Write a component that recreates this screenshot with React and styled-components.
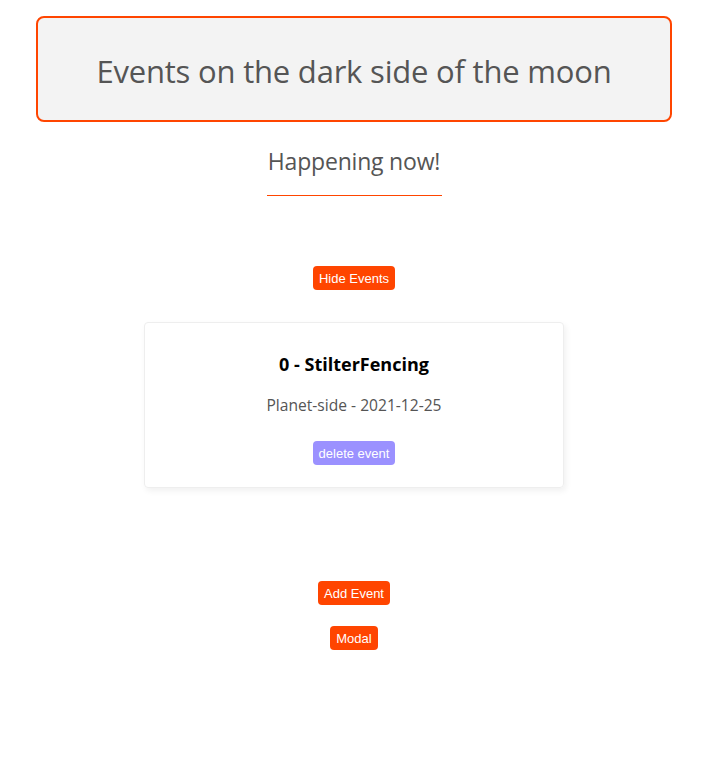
import React from "react";
import styled, { createGlobalStyle } from "styled-components";

const GlobalStyle = createGlobalStyle`
  body {
    margin: 0;
    background: #fff;
    font-family: "Open Sans", "Noto Sans", sans-serif;
  }
`;

const Page = styled.div`
  width: 708px;
  display: flex;
  flex-direction: column;
  align-items: center;
  padding-top: 16px;
`;

const Header = styled.header`
  box-sizing: border-box;
  width: 636px;
  height: 106px;
  padding-top: 4px;
  display: flex;
  align-items: center;
  justify-content: center;
  background: #f3f3f3;
  border: 2px solid #ff4500;
  border-radius: 8px;

  h1 {
    margin: 0;
    font-size: 31px;
    font-weight: 400;
    color: #555;
    letter-spacing: -0.2px;
  }
`;

const Subtitle = styled.h2`
  margin: 23px 0 0;
  padding-bottom: 18px;
  width: 175px;
  text-align: center;
  font-size: 23px;
  font-weight: 400;
  color: #555;
  letter-spacing: -0.2px;
  border-bottom: 1px solid #ff4500;
`;

const Button = styled.button`
  font-family: "Liberation Sans", Arial, sans-serif;
  font-size: 13px;
  font-weight: 400;
  color: #fff;
  background: ${({ $variant }) => ($variant === "soft" ? "#9b91ff" : "#ff4500")};
  border: none;
  border-radius: 4px;
  height: 24px;
  padding: 0 6px;
  cursor: pointer;
  margin-top: ${({ $mt }) => $mt || 0}px;
`;

const Card = styled.div`
  box-sizing: border-box;
  width: 420px;
  height: 166px;
  margin-top: 32px;
  border: 1px solid #eee;
  border-radius: 4px;
  box-shadow: 2px 3px 6px rgba(0, 0, 0, 0.06);
  display: flex;
  flex-direction: column;
  align-items: center;
  padding-top: 29px;

  h3 {
    margin: 0;
    font-size: 18px;
    font-weight: 700;
    color: #000;
  }

  p {
    margin: 18px 0 0;
    font-size: 15.6px;
    color: #555;
  }
`;

export default function App() {
  return (
    <>
      <GlobalStyle />
      <Page>
        <Header>
          <h1>Events on the dark side of the moon</h1>
        </Header>
        <Subtitle>Happening now!</Subtitle>
        <Button $mt={70}>Hide Events</Button>
        <Card>
          <h3>0 - StilterFencing</h3>
          <p>Planet-side - 2021-12-25</p>
          <Button $variant="soft" $mt={25}>delete event</Button>
        </Card>
        <Button $mt={93}>Add Event</Button>
        <Button $mt={21}>Modal</Button>
      </Page>
    </>
  );
}
